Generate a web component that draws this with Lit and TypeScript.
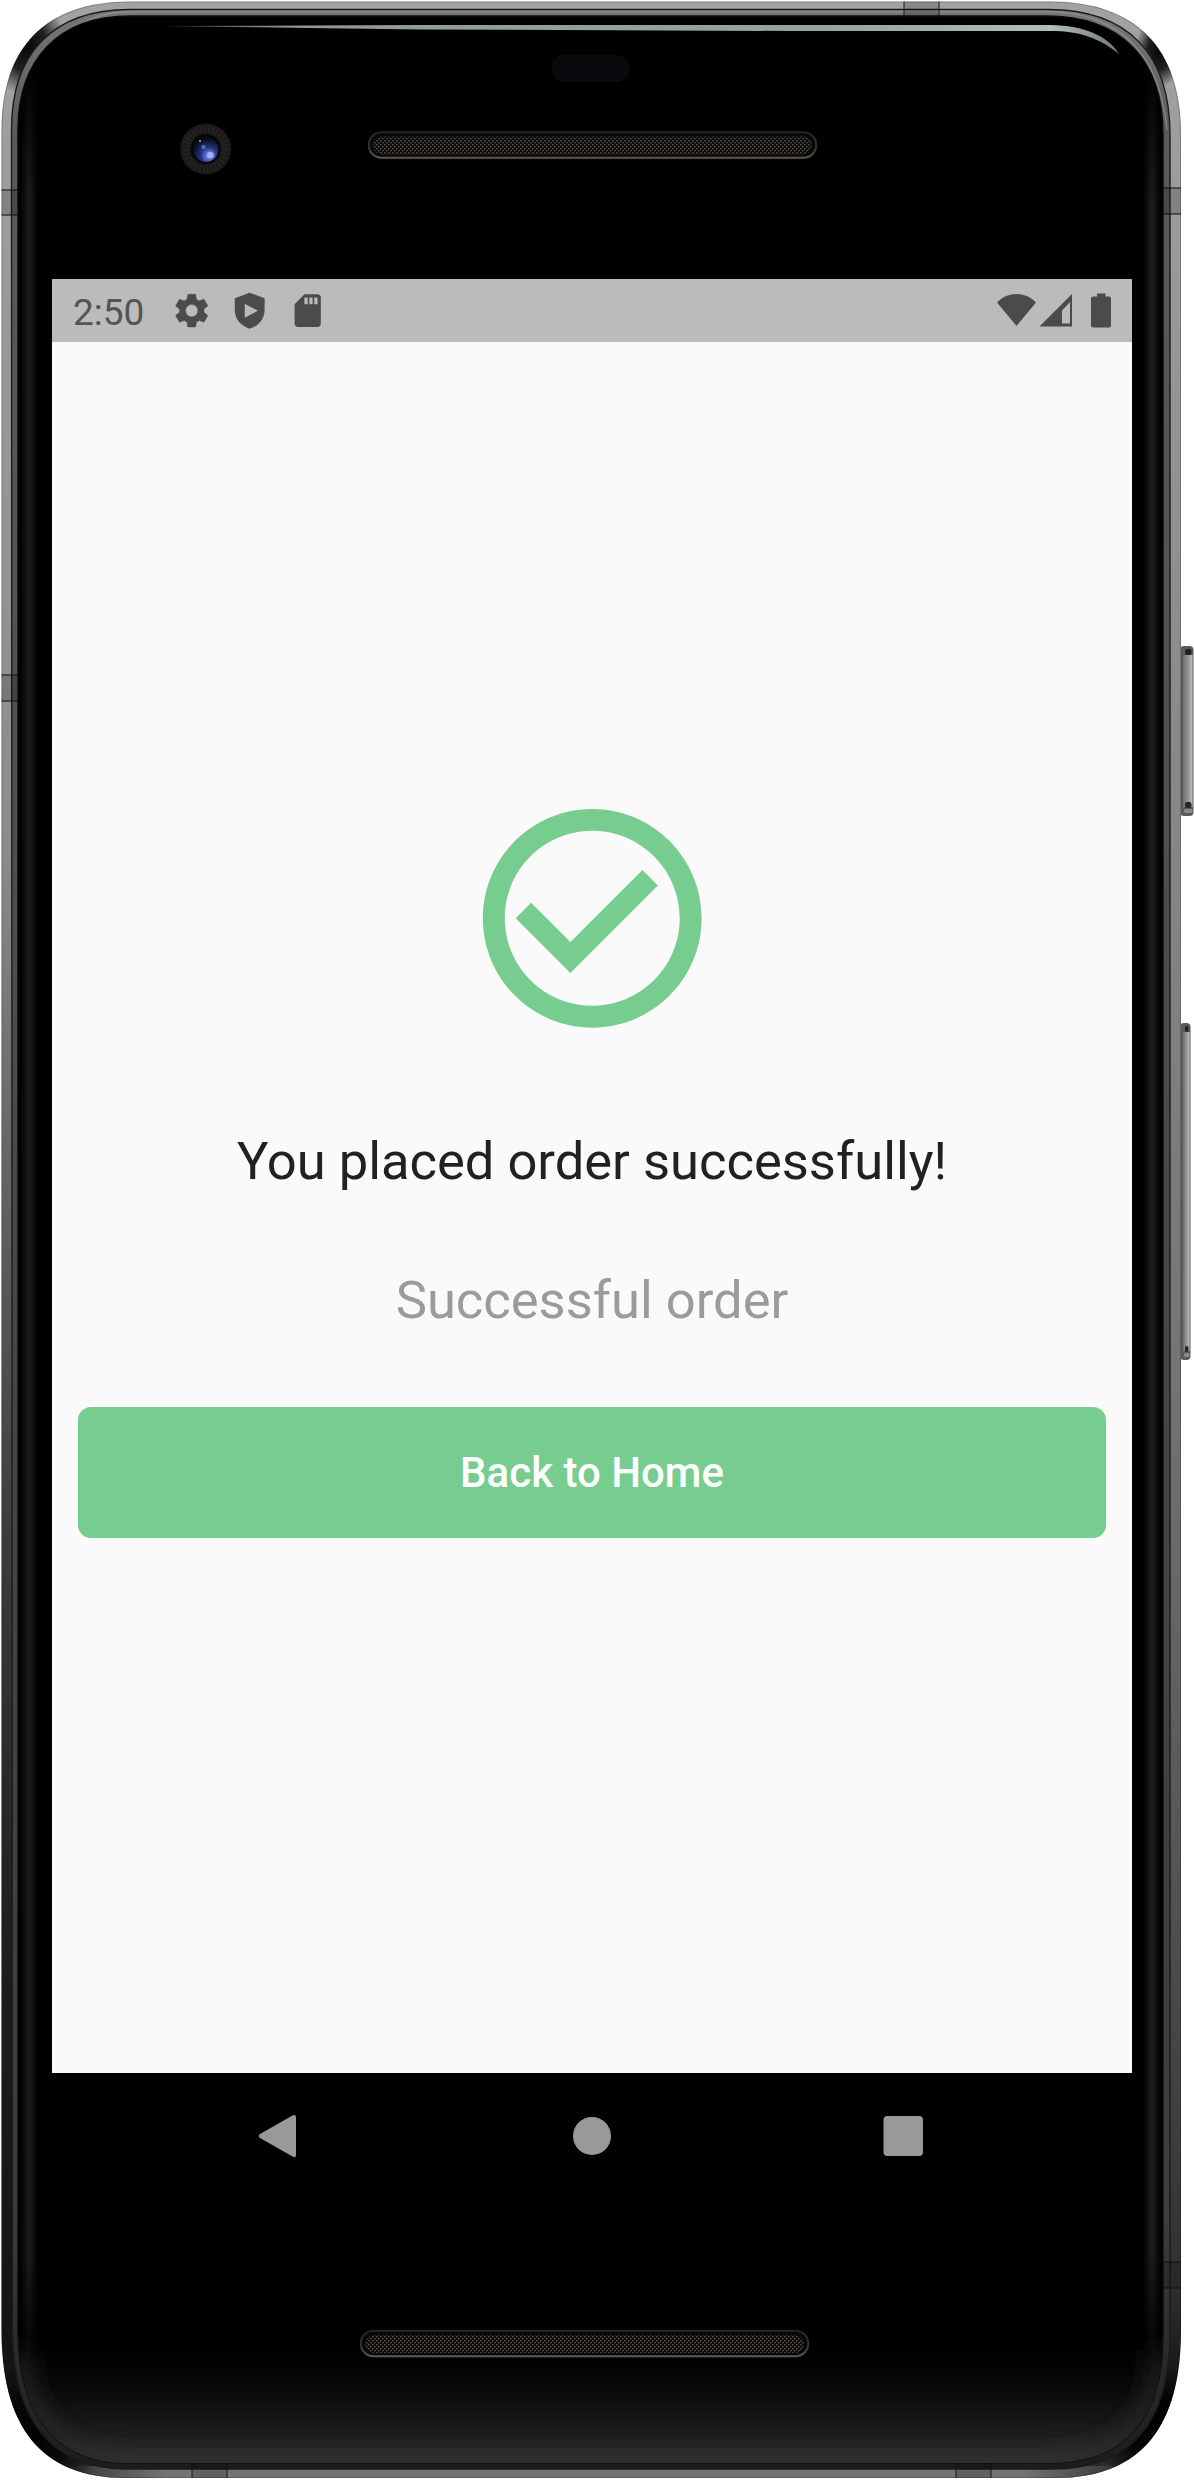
import { LitElement, html, css, svg } from "lit";
import { customElement, property } from "lit/decorators.js";

const OUTER =
  "M1.5 130C1.5 48 45 1.5 130 1.5H1050C1136 1.5 1181 48 1181 135V2330C1181 2425 1142 2478 1056 2478H125C40 2478 1.5 2425 1.5 2330Z";
const RIM =
  "M11.5 130C11.5 54 52 9.5 130 9.5H1048C1128 9.5 1170 54 1170 135V2332C1170 2420 1134 2469 1052 2469H127C50 2469 12.5 2418 12.5 2330Z";
const GLASS =
  "M18 130C18 60 58 16 130 16H1046C1122 16 1163 60 1163 135V2334C1163 2416 1128 2463 1048 2463H127C56 2463 18 2414 18 2330Z";

@customElement("device-frame")
export class DeviceFrame extends LitElement {
  static styles = css`
    :host {
      display: block;
    }
    .art {
      display: block;
      width: 1194px;
      height: 2480px;
    }
  `;

  private band(x: number, y: number, w: number, h: number) {
    const edges =
      Math.max(w, h) === w && w > 30
        ? `M${x} ${y}v${h}M${x + w} ${y}v${h}`
        : `M${x} ${y}h${w}M${x} ${y + h}h${w}`;
    return svg`
      <rect x=${x} y=${y} width=${w} height=${h} fill="#000" fill-opacity=".16"/>
      <path d=${edges} stroke="#111" stroke-opacity=".7" stroke-width="1.3"/>`;
  }

  private speaker(x: number, y: number) {
    return svg`
      <rect x=${x + 0.75} y=${y + 0.75} width="447.5" height="25.5" rx="12.75" fill="#080808" stroke="url(#lip)" stroke-width="2"/>
      <rect x=${x + 5} y=${y + 5} width="439" height="18" rx="9" fill="url(#mesh)"/>`;
  }

  private sideKey(y: number, w: number, h: number) {
    return svg`
      <rect x="1180" y=${y} width=${w + 1} height=${h} rx="4" fill="#5a5a5a"/>
      <rect x="1183" y=${y + 9} width=${w - 3} height=${h - 18} fill="url(#key)"/>
      <rect x="1185" y=${y + 3} width=${w - 6} height="6" rx="2" fill="#222"/>
      <rect x="1185" y=${y + h - 14} width=${w - 6} height="6" rx="2" fill="#262626"/>
      <rect x="1184" y=${y + h - 7} width=${w - 4} height="4" rx="1.5" fill="#8b8b8b"/>`;
  }

  render() {
    return html`<svg class="art" viewBox="0 0 1194 2480" aria-hidden="true">
      <defs>
        <linearGradient id="left" x1="0" y1="0" x2="0" y2="1">
          <stop offset="0" stop-color="#a2a2a2" />
          <stop offset=".34" stop-color="#8c8c8c" />
          <stop offset=".46" stop-color="#686868" />
          <stop offset=".62" stop-color="#3c3c3c" />
          <stop offset=".78" stop-color="#1f1f1f" />
          <stop offset=".95" stop-color="#131313" />
          <stop offset="1" stop-color="#333" />
        </linearGradient>
        <linearGradient id="right" x1="0" y1="0" x2="0" y2="1">
          <stop offset="0" stop-color="#a2a2a2" />
          <stop offset=".3" stop-color="#898989" />
          <stop offset=".55" stop-color="#757575" />
          <stop offset=".75" stop-color="#555" />
          <stop offset=".92" stop-color="#303030" />
          <stop offset=".97" stop-color="#101010" />
          <stop offset="1" stop-color="#333" />
        </linearGradient>
        <linearGradient id="rim" x1="0" y1="0" x2="0" y2="1">
          <stop offset="0" stop-color="#777" />
          <stop offset=".05" stop-color="#5a5a5a" />
          <stop offset=".5" stop-color="#484848" />
          <stop offset=".9" stop-color="#3c3c3c" />
          <stop offset="1" stop-color="#1c1c1c" />
        </linearGradient>
        <linearGradient id="bottom" x1="0" y1="0" x2="1" y2="0">
          <stop offset="0" stop-color="#747474" stop-opacity="0" />
          <stop offset=".1" stop-color="#747474" />
          <stop offset=".9" stop-color="#747474" />
          <stop offset="1" stop-color="#747474" stop-opacity="0" />
        </linearGradient>
        <linearGradient id="chin" x1="0" y1="0" x2="0" y2="1">
          <stop offset="0" stop-color="#000" />
          <stop offset=".35" stop-color="#090909" />
          <stop offset=".75" stop-color="#1d1d1d" />
          <stop offset="1" stop-color="#303030" />
        </linearGradient>
        <linearGradient id="glow" x1="0" y1="0" x2="1" y2="0">
          <stop offset="0" stop-color="#000" />
          <stop offset=".5" stop-color="#1d1d1d" />
          <stop offset="1" stop-color="#000" />
        </linearGradient>
        <linearGradient id="fadeGrad" x1="0" y1="0" x2="0" y2="1">
          <stop offset="0" stop-color="#fff" stop-opacity="0" />
          <stop offset=".06" stop-color="#fff" />
          <stop offset=".95" stop-color="#fff" />
          <stop offset="1" stop-color="#fff" stop-opacity="0" />
        </linearGradient>
        <mask id="fade" maskUnits="userSpaceOnUse" x="0" y="60" width="1194" height="2310">
          <rect x="0" y="60" width="1194" height="2310" fill="url(#fadeGrad)" />
        </mask>
        <linearGradient id="key" x1="0" y1="0" x2="1" y2="0">
          <stop offset="0" stop-color="#707070" />
          <stop offset=".6" stop-color="#979797" />
          <stop offset="1" stop-color="#c4c4c4" />
        </linearGradient>
        <linearGradient id="lip" x1="0" y1="0" x2="0" y2="1">
          <stop offset="0" stop-color="#252525" />
          <stop offset=".6" stop-color="#333332" />
          <stop offset="1" stop-color="#5c5954" />
        </linearGradient>
        <linearGradient id="shine" x1="0" y1="0" x2="1" y2="0">
          <stop offset="0" stop-color="#8f9a99" stop-opacity=".5" />
          <stop offset=".15" stop-color="#8f9a99" />
          <stop offset=".7" stop-color="#98a2a2" />
          <stop offset=".93" stop-color="#b3bcbc" />
          <stop offset="1" stop-color="#6c7877" />
        </linearGradient>
        <radialGradient id="shadow">
          <stop offset="0" stop-color="#000" stop-opacity=".95" />
          <stop offset=".5" stop-color="#000" stop-opacity=".8" />
          <stop offset="1" stop-color="#000" stop-opacity="0" />
        </radialGradient>
        <radialGradient id="lens" cx=".62" cy=".75" r=".75">
          <stop offset="0" stop-color="#8c9df0" />
          <stop offset=".2" stop-color="#5a70d0" />
          <stop offset=".45" stop-color="#22327a" />
          <stop offset=".8" stop-color="#0e1530" />
          <stop offset="1" stop-color="#07090f" />
        </radialGradient>
        <pattern id="mesh" width="4" height="4" patternUnits="userSpaceOnUse">
          <rect width="4" height="4" fill="#0c0b0a" />
          <rect x="0" y="0" width="1.6" height="1.5" fill="#504b43" />
          <rect x="2" y="2" width="1.6" height="1.5" fill="#504b43" />
        </pattern>
        <clipPath id="body"><path d=${OUTER} /></clipPath>
        <clipPath id="panel"><path d=${GLASS} /></clipPath>
        <filter id="soft" x="-20%" y="-60%" width="140%" height="220%">
          <feGaussianBlur stdDeviation="13" />
        </filter>
      </defs>

      ${this.sideKey(646, 12.5, 170)} ${this.sideKey(1023, 9.5, 337)}

      <g clip-path="url(#body)">
        <rect width="592" height="2480" fill="url(#left)" />
        <rect x="592" width="602" height="2480" fill="url(#right)" />
        <rect x="60" y="2466" width="1070" height="14" fill="url(#bottom)" />
        <ellipse cx="27" cy="47" rx="40" ry="48" fill="url(#shadow)" />
        <ellipse cx="1159" cy="52" rx="24" ry="36" fill="url(#shadow)" />
        <ellipse cx="32" cy="2436" rx="70" ry="75" fill="url(#shadow)" />
        <ellipse cx="1158" cy="2432" rx="60" ry="68" fill="url(#shadow)" />
        <path d=${OUTER} fill="none" stroke="#000" stroke-opacity=".2" stroke-width="2" />
        <path d=${RIM} fill="url(#rim)" stroke="#1b1b1b" stroke-width="1.4" />
        <path
          d="M60 43C80 20 100 11.5 135 11.5H1046C1120 12 1160 54 1167 130"
          fill="none"
          stroke="#989898"
          stroke-opacity=".65"
          stroke-width="1.3"
        />
        ${this.band(0, 190, 18, 25)} ${this.band(0, 675, 18, 26)}
        ${this.band(1163, 188, 20, 26)} ${this.band(1163, 2262, 20, 26)}
        ${this.band(904, 0, 35, 16)} ${this.band(192, 2463, 35, 16)}
        ${this.band(956, 2463, 35, 16)}
      </g>

      <path d=${GLASS} fill="#000" stroke="#0b0b0d" stroke-width="1.5" />
      <g clip-path="url(#panel)">
        <rect x="18" y="2350" width="1146" height="113" fill="url(#chin)" />
        <path
          d="M18 2350C18 2414 56 2466 127 2466H1048C1128 2466 1163 2416 1163 2350"
          fill="none"
          stroke="#303030"
          stroke-width="20"
          stroke-opacity=".85"
          filter="url(#soft)"
        />
        <g mask="url(#fade)">
          <rect x="20" y="60" width="18" height="2310" fill="url(#glow)" />
          <rect x="1143" y="60" width="18" height="2310" fill="url(#glow)" />
        </g>
      </g>
      <path
        d="M158 26L420 25H1050C1085 25.500 1108 36 1119 54C1100 39 1082 31 1050 31H794L420 29.500Z"
        fill="url(#shine)"
      />

      <rect x="551.500" y="55" width="78" height="27" rx="13" fill="#090a0e" />
      <circle cx="205.700" cy="149" r="25.500" fill="#1b191a" />
      <circle
        cx="205.700"
        cy="149"
        r="20"
        fill="none"
        stroke="#2b2726"
        stroke-width="7"
        stroke-dasharray="2 2"
        stroke-opacity=".7"
      />
      <circle cx="205.700" cy="149" r="15" fill="#060608" />
      <circle cx="206" cy="149.500" r="12.500" fill="url(#lens)" />
      <circle cx="203.500" cy="147" r="2.300" fill="#5166bf" />
      <circle cx="200" cy="141" r="1" fill="#aab4d8" />
      <circle cx="210.500" cy="155" r="3.300" fill="#b4c0fa" fill-opacity=".75" />

      ${this.speaker(368, 131.5)} ${this.speaker(360, 2330)}
    </svg>`;
  }
}

@customElement("status-bar")
export class StatusBar extends LitElement {
  @property() time = "";

  static styles = css`
    :host {
      display: flex;
      align-items: center;
      box-sizing: border-box;
      height: 63px;
      padding: 0 20px 0 21px;
      background: #bbbbbb;
      color: #4b4b4b;
      font: 400 37px/63px Roboto, sans-serif;
    }
    .time {
      width: 99px;
      padding-top: 3px;
      color: #545454;
    }
    .icons {
      display: flex;
      gap: 18.6px;
    }
    .glyph {
      display: block;
      width: 39.4px;
      height: 39.4px;
      fill: currentColor;
    }
    .system {
      display: block;
      margin-left: auto;
      width: 116px;
      height: 36px;
      fill: currentColor;
    }
  `;

  render() {
    return html`
      <span class="time">${this.time}</span>
      <div class="icons">
        <svg class="glyph" viewBox="0 0 24 24">
          <path
            fill-rule="evenodd"
            stroke="currentColor"
            stroke-width=".25"
            d="M19.43 12.98c.04-.32.07-.64.07-.98s-.03-.66-.07-.98l2.11-1.65c.19-.15.24-.42.12-.64l-2-3.46c-.12-.22-.39-.3-.61-.22l-2.490 1c-.52-.4-1.080-.73-1.690-.98l-.38-2.650C14.460 2.180 14.250 2 14 2h-4c-.25 0-.46.18-.49.42l-.38 2.650c-.61.25-1.170.59-1.690.98l-2.490-1c-.23-.09-.49 0-.61.22l-2 3.460c-.13.22-.07.49.12.64l2.110 1.650c-.04.32-.07.65-.07.98s.03.66.07.98l-2.110 1.650c-.19.15-.24.42-.12.64l2 3.460c.12.22.39.3.61.22l2.490-1c.52.4 1.080.73 1.690.98l.38 2.650c.03.24.24.42.49.42h4c.25 0 .46-.18.49-.42l.38-2.650c.61-.25 1.170-.59 1.690-.98l2.490 1c.23.09.49 0 .61-.22l2-3.460c.12-.22.07-.49-.12-.64l-2.110-1.650zM12 15.700c-2.040 0-3.700-1.660-3.700-3.700s1.660-3.700 3.700-3.700 3.700 1.660 3.700 3.700-1.660 3.700-3.700 3.700z"
          />
        </svg>
        <svg class="glyph" viewBox="0 0 24 24">
          <path
            fill-rule="evenodd"
            d="M12 1L21.100 4.400V11C21.100 17 18 21 12 23C6 21 2.900 17 2.900 11V4.400ZM9 7.700V16.300L17 12Z"
          />
        </svg>
        <svg class="glyph" viewBox="0 0 24 24">
          <path
            d="M18 2h-8L4.020 8 4 20c0 1.100.9 2 2 2h12c1.100 0 2-.9 2-2V4c0-1.100-.9-2-2-2zm-6 6h-2V4h2v4zm3 0h-2V4h2v4zm3 0h-2V4h2v4z"
          />
        </svg>
      </div>
      <svg class="system" viewBox="996 292.500 116 36">
        <path d="M997 302C1008 290.800 1025 290.800 1036 302L1016.500 325.500Z" />
        <path
          fill-rule="evenodd"
          d="M1072 293.500V326H1039.500ZM1070 301.500L1062 310V323H1070Z"
        />
        <path
          d="M1097 293h8.500v3h3.500q2 0 2 2v27q0 2-2 2h-16q-2 0-2-2v-27q0-2 2-2h4z"
        />
      </svg>
    `;
  }
}

@customElement("order-success")
export class OrderSuccess extends LitElement {
  static styles = css`
    :host {
      display: flex;
      flex-direction: column;
      align-items: center;
      box-sizing: border-box;
      height: 1731px;
      padding: 445px 26px 0;
      background: #fafafa;
      font-family: Roboto, sans-serif;
      text-align: center;
    }
    .check {
      display: block;
      width: 262.5px;
      height: 262.5px;
      fill: #77cd90;
    }
    .title,
    .note {
      margin: 80px 0 0;
      font-size: 52.5px;
      line-height: 62px;
      font-weight: 400;
      color: #212121;
      white-space: nowrap;
    }
    .note {
      margin-top: 77px;
      color: #9b9b9b;
    }
    .home {
      width: 100%;
      height: 131px;
      margin-top: 76px;
      padding: 2px 0 0;
      border: 0;
      border-radius: 13px;
      background: #77cd90;
      color: #fff;
      font: 500 42px/50px Roboto, sans-serif;
    }
  `;

  render() {
    return html`
      <svg class="check" viewBox="0 0 24 24">
        <path
          d="M16.590 7.580L10 14.170l-3.590-3.580L5 12l5 5 8-8zM12 2C6.480 2 2 6.480 2 12s4.480 10 10 10 10-4.480 10-10S17.520 2 12 2zm0 18c-4.420 0-8-3.580-8-8s3.580-8 8-8 8 3.580 8 8-3.580 8-8 8z"
        />
      </svg>
      <h1 class="title">You placed order successfully!</h1>
      <p class="note">Successful order</p>
      <button class="home">Back to Home</button>
    `;
  }
}

@customElement("nav-keys")
export class NavKeys extends LitElement {
  static styles = css`
    :host {
      display: grid;
      grid-template-columns: repeat(3, 312px);
      justify-content: center;
      place-items: center;
      height: 126px;
    }
    .key {
      display: block;
      width: 44px;
      height: 44px;
      fill: #999;
    }
  `;

  render() {
    return html`
      <svg class="key" viewBox="258 2114 44 44">
        <path
          d="M260 2134L292.500 2115.500Q296 2114 296 2117.500V2155Q296 2158.500 292.500 2156.500L260 2138Q257.500 2136 260 2134Z"
        />
      </svg>
      <svg class="key" viewBox="0 0 44 44"><circle cx="22" cy="22" r="19" /></svg>
      <svg class="key" viewBox="0 0 44 44">
        <rect x="1.500" y="2" width="39.500" height="40" rx="4" />
      </svg>
    `;
  }
}

@customElement("app-root")
export class AppRoot extends LitElement {
  static styles = css`
    :host {
      display: grid;
      width: 1194px;
      height: 2480px;
      background: #fff;
      overflow: hidden;
    }
    .frame,
    .screen {
      grid-area: 1 / 1;
    }
    .screen {
      display: flex;
      flex-direction: column;
      width: 1080px;
      margin: 279px 0 0 52px;
      z-index: 1;
    }
  `;

  render() {
    return html`
      <device-frame class="frame"></device-frame>
      <main class="screen">
        <status-bar time="2:50"></status-bar>
        <order-success></order-success>
        <nav-keys></nav-keys>
      </main>
    `;
  }
}
